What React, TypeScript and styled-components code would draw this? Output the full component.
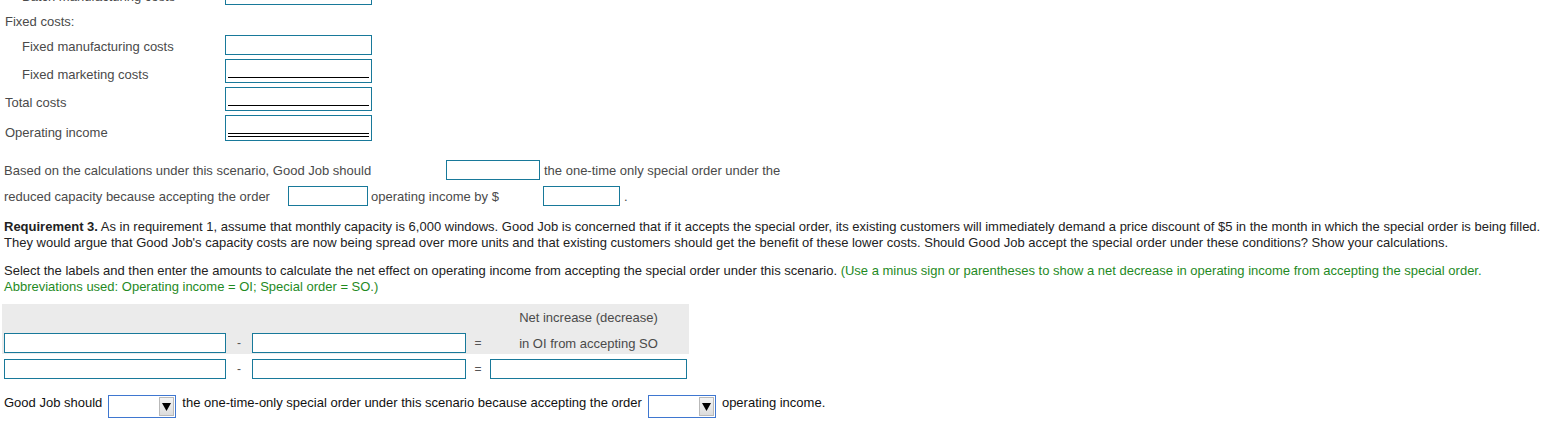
import React from "react";
import styled, { createGlobalStyle } from "styled-components";

const GlobalStyle = createGlobalStyle`
  html, body {
    margin: 0;
    padding: 0;
    background: #fff;
  }
  body {
    font-family: "Liberation Sans", Arial, sans-serif;
    font-size: 13px;
    color: #333;
  }
`;

const teal = "#18799a";

const Page = styled.div`
  box-sizing: border-box;
  height: 434px;
  overflow: hidden;
  padding: 0 4px;
`;

/* cost schedule */

const CostGrid = styled.div`
  display: grid;
  grid-template-columns: 221px 147px;
  row-gap: 4px;
  margin-top: -19px;
`;

const CostLabel = styled.div<{ $indent?: boolean }>`
  align-self: end;
  padding: 0 0 1px ${({ $indent }) => ($indent ? 18 : 1)}px;
  line-height: 15px;
  color: #4a4a4a;
  white-space: nowrap;
`;

const CostHeading = styled.div`
  grid-column: 1 / -1;
  box-sizing: border-box;
  height: 22px;
  display: flex;
  align-items: flex-end;
  padding: 0 0 2px 1px;
  line-height: 15px;
  color: #4a4a4a;
`;

const AmountBox = styled.div<{ $h: number; $rule?: "single" | "double" }>`
  position: relative;
  box-sizing: border-box;
  height: ${({ $h }) => $h}px;
  border: 1px solid ${teal};
  background: #fff;

  ${({ $rule }) =>
    $rule === "single"
      ? `&::after {
          content: "";
          position: absolute;
          left: 2px;
          right: 2px;
          bottom: 4px;
          border-top: 1px solid #000;
        }`
      : $rule === "double"
      ? `&::after {
          content: "";
          position: absolute;
          left: 2px;
          right: 2px;
          bottom: 3px;
          height: 2px;
          border-top: 1px solid #000;
          border-bottom: 1px solid #000;
        }`
      : ""}
`;

/* conclusion sentence with blanks */

const Sentence = styled.div`
  margin-top: 18px;
  display: flex;
  flex-direction: column;
  gap: 5px;
  color: #4a4a4a;
`;

const SentenceLine = styled.div`
  display: flex;
  align-items: center;
  height: 20px;
  white-space: nowrap;
  padding-top: 1px;
`;

const Cell = styled.span<{ $w?: number; $pad?: number }>`
  flex: none;
  box-sizing: border-box;
  ${({ $w }) => ($w ? `width: ${$w}px;` : "")}
  padding-left: ${({ $pad }) => $pad ?? 0}px;
`;

const Blank = styled.span<{ $w: number }>`
  flex: none;
  box-sizing: border-box;
  width: ${({ $w }) => $w}px;
  height: 20px;
  margin-top: -1px;
  border: 1px solid ${teal};
  background: #fff;
`;

/* requirement text */

const Para = styled.p<{ $gap: number }>`
  margin: ${({ $gap }) => $gap}px 0 0;
  line-height: 16px;
  color: #222;
  white-space: nowrap;
`;

const Green = styled.span`
  color: #1f8a1f;
`;

/* net effect table */

const cols = "222px 26px 214px 24px 197px";

const Table = styled.div`
  margin: 9px 0 0 -2px;
  width: 687px;
`;

const Shaded = styled.div`
  background: #ebebeb;
`;

const TableRow = styled.div<{ $h: number; $padTop?: number }>`
  display: grid;
  grid-template-columns: ${cols};
  align-items: center;
  box-sizing: border-box;
  height: ${({ $h }) => $h}px;
  padding: ${({ $padTop }) => $padTop ?? 0}px 2px 0;
`;

const HeadText = styled.div`
  grid-column: 5;
  text-align: center;
  color: #4a4a4a;
  white-space: nowrap;
`;

const RowText = styled.div`
  text-align: center;
  color: #4a4a4a;
  white-space: nowrap;
`;

const Sep = styled.div`
  text-align: center;
  color: #555;
  font-size: 12px;
`;

const TableInput = styled.div`
  box-sizing: border-box;
  height: 20px;
  border: 1px solid ${teal};
  background: #fff;
`;

/* final answer row */

const AnswerLine = styled.div`
  margin-top: 15px;
  display: flex;
  align-items: flex-end;
  gap: 6px;
  height: 23px;
  color: #111;
  white-space: nowrap;
`;

const Words = styled.span`
  line-height: 15px;
  margin-bottom: 8px;
`;

const Dropdown = styled.div`
  flex: none;
  box-sizing: border-box;
  width: 68px;
  height: 23px;
  border: 1px solid #3f77d0;
  background: #fff;
  display: flex;
  justify-content: flex-end;
  align-items: center;
  padding-right: 1px;
`;

const DropButton = styled.div`
  box-sizing: border-box;
  width: 15px;
  height: 19px;
  border: 1px solid #b9b9b9;
  background: linear-gradient(#f4f4f4, #dcdcdc);
  display: flex;
  align-items: center;
  justify-content: center;
`;

const Select = () => (
  <Dropdown>
    <DropButton>
      <svg width="9" height="9" viewBox="0 0 9 9">
        <polygon points="0,1 9,1 4.5,9" fill="#000" />
      </svg>
    </DropButton>
  </Dropdown>
);

export default function App() {
  return (
    <>
      <GlobalStyle />
      <Page>
        <CostGrid>
          <CostLabel $indent>Batch manufacturing costs</CostLabel>
          <AmountBox $h={24} />
          <CostHeading>Fixed costs:</CostHeading>
          <CostLabel $indent>Fixed manufacturing costs</CostLabel>
          <AmountBox $h={20} />
          <CostLabel $indent>Fixed marketing costs</CostLabel>
          <AmountBox $h={24} $rule="single" />
          <CostLabel>Total costs</CostLabel>
          <AmountBox $h={24} $rule="single" />
          <CostLabel>Operating income</CostLabel>
          <AmountBox $h={26} $rule="double" />
        </CostGrid>

        <Sentence>
          <SentenceLine>
            <Cell $w={442}>Based on the calculations under this scenario, Good Job should</Cell>
            <Blank $w={94} />
            <Cell $pad={4}>the one-time only special order under the</Cell>
          </SentenceLine>
          <SentenceLine>
            <Cell $w={284}>reduced capacity because accepting the order</Cell>
            <Blank $w={80} />
            <Cell $w={175} $pad={3}>operating income by $</Cell>
            <Blank $w={77} />
            <Cell $pad={4}>.</Cell>
          </SentenceLine>
        </Sentence>

        <Para $gap={13}>
          <b>Requirement 3.</b> As in requirement 1, assume that monthly capacity is 6,000 windows. Good Job is
          concerned that if it accepts the special order, its existing customers will immediately demand a price
          discount of $5 in the month in which the special order is being filled.
          <br />
          They would argue that Good Job's capacity costs are now being spread over more units and that existing
          customers should get the benefit of these lower costs. Should Good Job accept the special order under
          these conditions? Show your calculations.
        </Para>

        <Para $gap={12}>
          Select the labels and then enter the amounts to calculate the net effect on operating income from
          accepting the special order under this scenario.{" "}
          <Green>
            (Use a minus sign or parentheses to show a net decrease in operating income from accepting the
            special order.
            <br />
            Abbreviations used: Operating income = OI; Special order = SO.)
          </Green>
        </Para>

        <Table>
          <Shaded>
            <TableRow $h={27}>
              <HeadText>Net increase (decrease)</HeadText>
            </TableRow>
            <TableRow $h={23} $padTop={1}>
              <TableInput />
              <Sep>-</Sep>
              <TableInput />
              <Sep>=</Sep>
              <RowText>in OI from accepting SO</RowText>
            </TableRow>
          </Shaded>
          <TableRow $h={26} $padTop={3}>
            <TableInput />
            <Sep>-</Sep>
            <TableInput />
            <Sep>=</Sep>
            <TableInput />
          </TableRow>
        </Table>

        <AnswerLine>
          <Words>Good Job should</Words>
          <Select />
          <Words>the one-time-only special order under this scenario because accepting the order</Words>
          <Select />
          <Words>operating income.</Words>
        </AnswerLine>
      </Page>
    </>
  );
}
